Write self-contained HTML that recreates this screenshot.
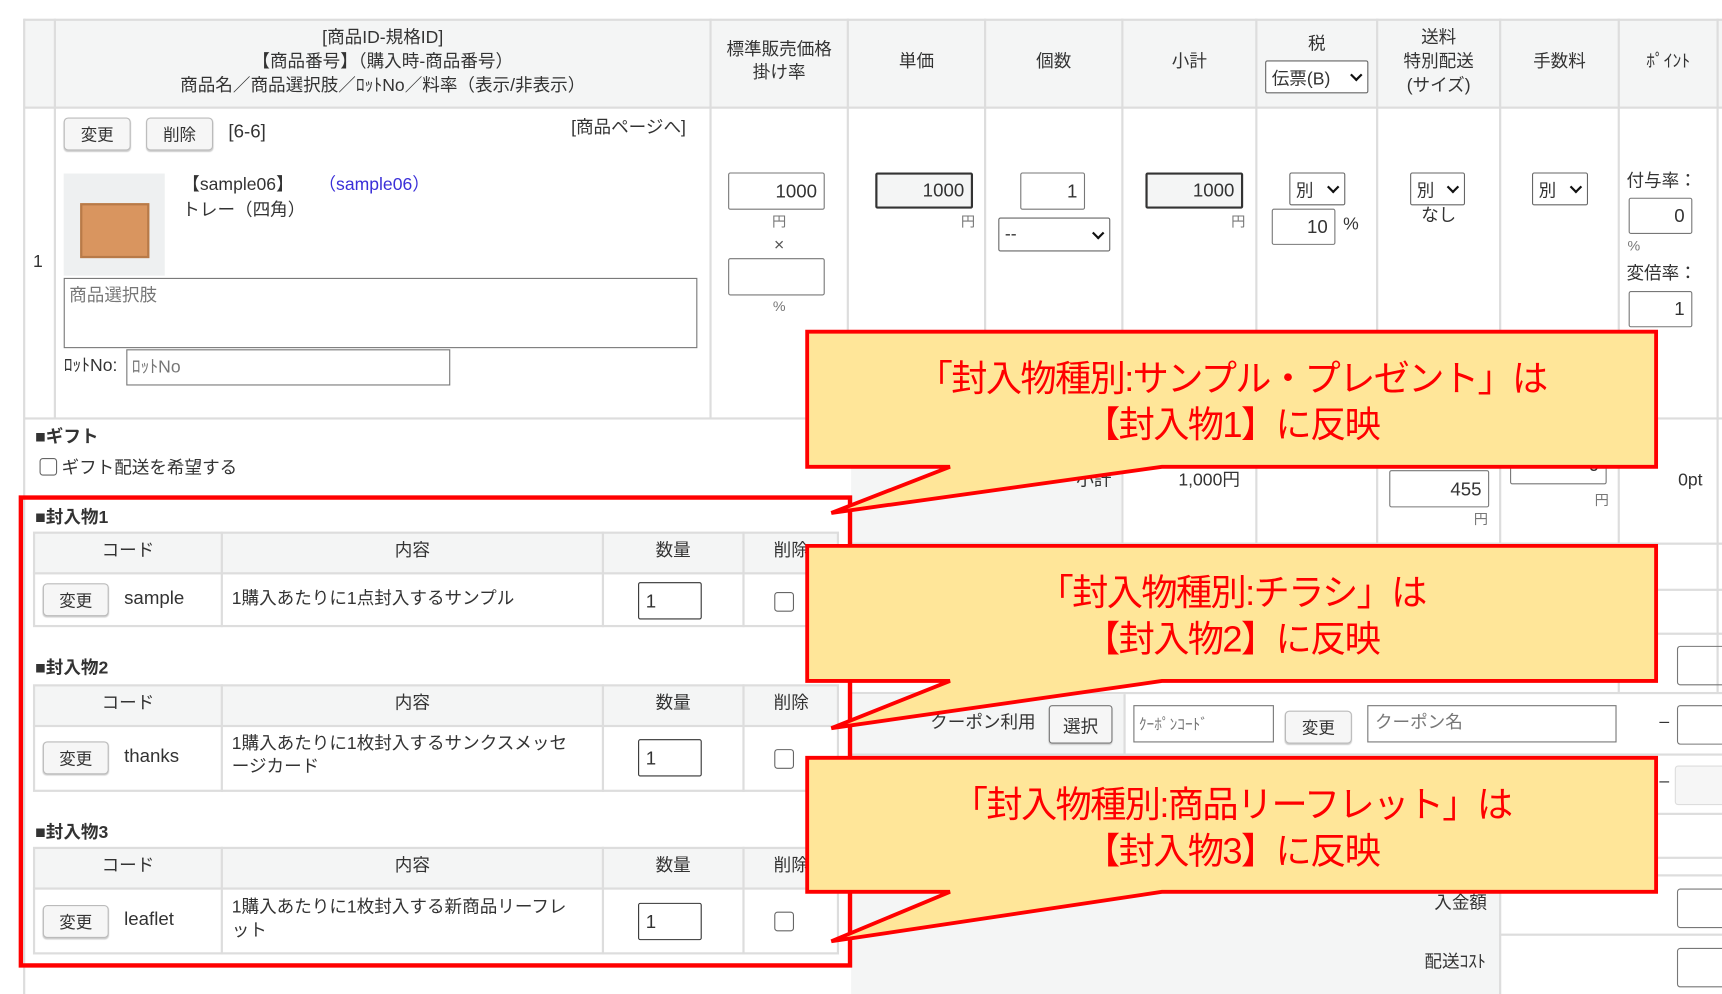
<!DOCTYPE html>
<html><head><meta charset="utf-8"><style>
html,body{margin:0;padding:0;background:#fff;width:1722px;height:994px;overflow:hidden}
#s{position:absolute;left:0;top:0;width:1568px;height:905px;transform:scale(1.09821,1.09834);transform-origin:0 0;font-family:"Liberation Sans","Noto Sans CJK JP",sans-serif;color:#333;font-size:16px}
.a{position:absolute}
.g{position:absolute;background:#f4f5f5}
.hl{position:absolute;height:2px;background:#ddd}
.vl{position:absolute;width:2px;background:#ddd}
.t{position:absolute;white-space:nowrap;line-height:1}
.c{text-align:center}
.co{font-size:33px;color:#f00;letter-spacing:-1.5px}
.in{position:absolute;border:1px solid #777;border-radius:2px;background:#fff;box-sizing:border-box;font-size:17px;line-height:1;display:flex;align-items:center;justify-content:flex-end;padding-right:6px}
.dk{border:2px solid #333;background:#f4f5f5}
.btn{position:absolute;border:1px solid #bbb;border-radius:4px;background:#f6f6f6;box-sizing:border-box;font-size:15px;display:flex;align-items:center;justify-content:center;box-shadow:0 1px 1px #ccc}
.sel{position:absolute;border:1px solid #666;border-radius:2px;background:#fff;box-sizing:border-box;font-size:16px;display:flex;align-items:center;padding-left:5px}
.sel:after{content:"";position:absolute;right:6px;top:50%;width:6px;height:6px;border-right:2.5px solid #111;border-bottom:2.5px solid #111;transform:translateY(-70%) rotate(45deg)}
.cb{position:absolute;width:16px;height:16px;border:1px solid #666;border-radius:3px;background:#fff;box-sizing:border-box}
.b{font-weight:bold}
</style></head><body><div id="s">
<div class="g" style="left:22px;top:18px;width:1546px;height:80px"></div>
<div class="hl" style="left:22px;top:17px;width:1546px"></div>
<div class="hl" style="left:22px;top:97px;width:1546px"></div>
<div class="hl" style="left:22px;top:380px;width:1546px"></div>
<div class="vl" style="left:21px;top:17px;height:888px"></div>
<div class="vl" style="left:49px;top:17px;height:364px"></div>
<div class="vl" style="left:646px;top:17px;height:364px"></div>
<div class="vl" style="left:771px;top:17px;height:364px"></div>
<div class="vl" style="left:896px;top:17px;height:364px"></div>
<div class="vl" style="left:1021px;top:17px;height:480px"></div>
<div class="vl" style="left:1143px;top:17px;height:480px"></div>
<div class="vl" style="left:1253px;top:17px;height:480px"></div>
<div class="vl" style="left:1365px;top:17px;height:480px"></div>
<div class="vl" style="left:1473px;top:17px;height:613px"></div>
<div class="vl" style="left:1563px;top:17px;height:613px"></div>

<div class="t c" style="left:50px;width:597px;top:27px">[商品ID-規格ID]</div>
<div class="t c" style="left:50px;width:597px;top:49px">【商品番号】（購入時-商品番号）</div>
<div class="t c" style="left:50px;width:597px;top:71px">商品名／商品選択肢／ﾛｯﾄNo／料率（表示/非表示）</div>
<div class="t c" style="left:647px;width:125px;top:38px">標準販売価格</div>
<div class="t c" style="left:647px;width:125px;top:59px">掛け率</div>
<div class="t c" style="left:772px;width:125px;top:49px">単価</div>
<div class="t c" style="left:897px;width:125px;top:49px">個数</div>
<div class="t c" style="left:1022px;width:122px;top:49px">小計</div>
<div class="t c" style="left:1144px;width:110px;top:33px">税</div>
<div class="sel" style="left:1152px;top:55px;width:94px;height:30px">伝票(B)</div>
<div class="t c" style="left:1254px;width:112px;top:27px">送料</div>
<div class="t c" style="left:1254px;width:112px;top:49px">特別配送</div>
<div class="t c" style="left:1254px;width:112px;top:71px">(サイズ)</div>
<div class="t c" style="left:1366px;width:108px;top:49px">手数料</div>
<div class="t c" style="left:1474px;width:90px;top:49px">ﾎﾟｲﾝﾄ</div>

<div class="t" style="left:30px;top:231px">1</div>
<div class="btn" style="left:58px;top:107px;width:61px;height:30px">変更</div>
<div class="btn" style="left:133px;top:107px;width:61px;height:30px">削除</div>
<div class="t" style="left:208px;top:111px;font-size:17px">[6-6]</div>
<div class="t" style="left:520px;top:109px">[商品ページへ]</div>
<div class="a" style="left:58px;top:158px;width:92px;height:93px;background:#eef0f1"><div class="a" style="left:15px;top:27px;width:63px;height:50px;background:#d9955f;border:2px solid #b87a48;box-sizing:border-box"></div></div>
<div class="t" style="left:166px;top:161px">【sample06】</div>
<div class="t" style="left:290px;top:161px;color:#3a2fd8">（sample06）</div>
<div class="t" style="left:166px;top:184px">トレー（四角）</div>
<div class="a" style="left:58px;top:253px;width:577px;height:64px;border:1px solid #777;box-sizing:border-box;background:#fff"><div class="t" style="left:4px;top:8px;color:#777">商品選択肢</div></div>
<div class="t" style="left:58px;top:326px">ﾛｯﾄNo:</div>
<div class="a" style="left:115px;top:318px;width:295px;height:33px;border:1px solid #777;box-sizing:border-box;background:#fff"><div class="t" style="left:4px;top:8px;color:#777">ﾛｯﾄNo</div></div>

<div class="in" style="left:663px;top:157px;width:88px;height:34px">1000</div>
<div class="t c" style="left:647px;width:125px;top:195px;font-size:13px;color:#777">円</div>
<div class="t c" style="left:647px;width:125px;top:216px;color:#555">×</div>
<div class="in" style="left:663px;top:235px;width:88px;height:34px"></div>
<div class="t c" style="left:647px;width:125px;top:272px;font-size:13px;color:#777">%</div>

<div class="in dk" style="left:797px;top:157px;width:89px;height:33px">1000</div>
<div class="t" style="left:875px;top:195px;font-size:13px;color:#777">円</div>
<div class="in" style="left:929px;top:157px;width:59px;height:34px">1</div>
<div class="sel" style="left:909px;top:198px;width:102px;height:31px">--</div>
<div class="in dk" style="left:1043px;top:157px;width:89px;height:33px">1000</div>
<div class="t" style="left:1121px;top:195px;font-size:13px;color:#777">円</div>
<div class="sel" style="left:1174px;top:157px;width:51px;height:30px">別</div>
<div class="in" style="left:1158px;top:190px;width:58px;height:33px">10</div>
<div class="t" style="left:1223px;top:197px">%</div>
<div class="sel" style="left:1284px;top:157px;width:50px;height:30px">別</div>
<div class="t c" style="left:1254px;width:112px;top:189px">なし</div>
<div class="sel" style="left:1395px;top:157px;width:51px;height:30px">別</div>
<div class="t" style="left:1481px;top:158px">付与率：</div>
<div class="in" style="left:1483px;top:180px;width:58px;height:33px">0</div>
<div class="t" style="left:1482px;top:217px;font-size:13px;color:#777">%</div>
<div class="t" style="left:1481px;top:242px">変倍率：</div>
<div class="in" style="left:1483px;top:265px;width:58px;height:33px">1</div>

<div class="g" style="left:775px;top:382px;width:246px;height:113px"></div>
<div class="hl" style="left:775px;top:494px;width:793px"></div>
<div class="t" style="left:980px;top:430px">小計</div>
<div class="t" style="left:1073px;top:430px">1,000円</div>
<div class="in" style="left:1265px;top:428px;width:91px;height:34px">455</div>
<div class="t" style="left:1342px;top:466px;font-size:13px;color:#777">円</div>
<div class="in" style="left:1375px;top:405px;width:88px;height:36px">0</div>
<div class="t" style="left:1452px;top:449px;font-size:13px;color:#777">円</div>
<div class="t" style="left:1528px;top:430px">0pt</div>

<div class="hl" style="left:775px;top:536px;width:793px"></div>
<div class="hl" style="left:775px;top:576px;width:793px"></div>
<div class="hl" style="left:775px;top:630px;width:793px"></div>
<div class="hl" style="left:775px;top:686px;width:793px"></div>
<div class="hl" style="left:775px;top:740px;width:793px"></div>
<div class="hl" style="left:775px;top:780px;width:793px"></div>
<div class="hl" style="left:775px;top:796px;width:793px"></div>
<div class="hl" style="left:775px;top:850px;width:793px"></div>
<div class="g" style="left:775px;top:632px;width:249px;height:54px"></div>
<div class="g" style="left:775px;top:798px;width:590px;height:107px"></div>
<div class="vl" style="left:1365px;top:798px;height:107px"></div>
<div class="vl" style="left:1023px;top:632px;height:54px"></div>
<div class="t" style="left:847px;top:651px">クーポン利用</div>
<div class="btn" style="left:955px;top:642px;width:58px;height:35px;border-color:#777;border-radius:3px;font-size:16px">選択</div>
<div class="a" style="left:1032px;top:642px;width:128px;height:34px;border:1px solid #777;box-sizing:border-box"><div class="t" style="left:4px;top:9px;color:#777;font-size:14px">ｸｰﾎﾟﾝｺｰﾄﾞ</div></div>
<div class="btn" style="left:1170px;top:647px;width:61px;height:30px">変更</div>
<div class="a" style="left:1245px;top:642px;width:227px;height:34px;border:1px solid #777;box-sizing:border-box"><div class="t" style="left:6px;top:8px;color:#777">クーポン名</div></div>
<div class="t" style="left:1511px;top:650px">–</div>
<div class="t" style="left:1511px;top:704px">–</div>
<div class="a" style="left:1527px;top:588px;width:50px;height:34px;border:1px solid #777;border-radius:3px"></div>
<div class="a" style="left:1527px;top:642px;width:50px;height:34px;border:1px solid #777;border-radius:3px"></div>
<div class="a" style="left:1525px;top:697px;width:50px;height:34px;border:1px solid #ddd;background:#f6f6f6;border-radius:3px"></div>
<div class="a" style="left:1527px;top:809px;width:50px;height:34px;border:1px solid #777;border-radius:3px"></div>
<div class="a" style="left:1527px;top:863px;width:50px;height:34px;border:1px solid #777;border-radius:3px"></div>
<div class="t" style="left:1306px;top:815px">入金額</div>
<div class="t" style="left:1297px;top:869px">配送ｺｽﾄ</div>

<div class="t b" style="left:32px;top:391px">■ギフト</div>
<div class="cb" style="left:36px;top:417px"></div>
<div class="t" style="left:56px;top:419px">ギフト配送を希望する</div>

<div class="t b" style="left:32px;top:464px">■封入物1</div>
<div class="t b" style="left:32px;top:601px">■封入物2</div>
<div class="t b" style="left:32px;top:751px">■封入物3</div>

<div class="g" style="left:31px;top:485px;width:733px;height:37px"></div>
<div class="a" style="left:30px;top:484px;width:734px;height:87px;border:2px solid #ddd;box-sizing:border-box"></div>
<div class="hl" style="left:30px;top:521px;width:734px"></div>
<div class="vl" style="left:201px;top:484px;height:87px"></div>
<div class="vl" style="left:548px;top:484px;height:87px"></div>
<div class="vl" style="left:676px;top:484px;height:87px"></div>
<div class="t c" style="left:31px;width:171px;top:494px">コード</div>
<div class="t c" style="left:202px;width:347px;top:494px">内容</div>
<div class="t c" style="left:549px;width:128px;top:494px">数量</div>
<div class="t c" style="left:677px;width:87px;top:494px">削除</div>
<div class="btn" style="left:39px;top:531px;width:60px;height:30px">変更</div>
<div class="t" style="left:113px;top:536px;font-size:17px">sample</div>
<div class="t" style="left:211px;top:538px">1購入あたりに1点封入するサンプル</div>
<div class="in" style="left:581px;top:530px;width:58px;height:34px;justify-content:flex-start;padding-left:6px;border-color:#333">1</div>
<div class="cb" style="left:705px;top:539px;width:18px;height:18px"></div>

<div class="g" style="left:31px;top:624px;width:733px;height:37px"></div>
<div class="a" style="left:30px;top:623px;width:734px;height:98px;border:2px solid #ddd;box-sizing:border-box"></div>
<div class="hl" style="left:30px;top:660px;width:734px"></div>
<div class="vl" style="left:201px;top:623px;height:98px"></div>
<div class="vl" style="left:548px;top:623px;height:98px"></div>
<div class="vl" style="left:676px;top:623px;height:98px"></div>
<div class="t c" style="left:31px;width:171px;top:633px">コード</div>
<div class="t c" style="left:202px;width:347px;top:633px">内容</div>
<div class="t c" style="left:549px;width:128px;top:633px">数量</div>
<div class="t c" style="left:677px;width:87px;top:633px">削除</div>
<div class="btn" style="left:39px;top:675px;width:60px;height:30px">変更</div>
<div class="t" style="left:113px;top:680px;font-size:17px">thanks</div>
<div class="t" style="left:211px;top:670px">1購入あたりに1枚封入するサンクスメッセ</div>
<div class="t" style="left:211px;top:691px">ージカード</div>
<div class="in" style="left:581px;top:673px;width:58px;height:34px;justify-content:flex-start;padding-left:6px;border-color:#333">1</div>
<div class="cb" style="left:705px;top:682px;width:18px;height:18px"></div>

<div class="g" style="left:31px;top:772px;width:733px;height:37px"></div>
<div class="a" style="left:30px;top:771px;width:734px;height:98px;border:2px solid #ddd;box-sizing:border-box"></div>
<div class="hl" style="left:30px;top:808px;width:734px"></div>
<div class="vl" style="left:201px;top:771px;height:98px"></div>
<div class="vl" style="left:548px;top:771px;height:98px"></div>
<div class="vl" style="left:676px;top:771px;height:98px"></div>
<div class="t c" style="left:31px;width:171px;top:781px">コード</div>
<div class="t c" style="left:202px;width:347px;top:781px">内容</div>
<div class="t c" style="left:549px;width:128px;top:781px">数量</div>
<div class="t c" style="left:677px;width:87px;top:781px">削除</div>
<div class="btn" style="left:39px;top:824px;width:60px;height:30px">変更</div>
<div class="t" style="left:113px;top:828px;font-size:17px">leaflet</div>
<div class="t" style="left:211px;top:819px">1購入あたりに1枚封入する新商品リーフレ</div>
<div class="t" style="left:211px;top:840px">ット</div>
<div class="in" style="left:581px;top:822px;width:58px;height:34px;justify-content:flex-start;padding-left:6px;border-color:#333">1</div>
<div class="cb" style="left:705px;top:830px;width:18px;height:18px"></div>

<div class="a" style="left:17px;top:451px;width:759px;height:430px;border:4px solid #f00;box-sizing:border-box"></div>

<svg class="a" style="left:0;top:0" width="1568" height="905">
<g fill="#ffe699" stroke="#f00" stroke-width="3.5" stroke-linejoin="miter">
<path d="M735,302 H1508 V425 H1058 L757,467 L865,425 H735 Z"/>
<path d="M735,497 H1508 V620 H1058 L757,663 L865,620 H735 Z"/>
<path d="M735,690 H1508 V812 H1058 L757,857 L865,812 H735 Z"/>
</g>
</svg>
<div class="t c co" style="left:735px;width:773px;top:328px">「封入物種別:サンプル・プレゼント」は</div>
<div class="t c co" style="left:735px;width:773px;top:370px">【封入物1】に反映</div>
<div class="t c co" style="left:735px;width:773px;top:523px">「封入物種別:チラシ」は</div>
<div class="t c co" style="left:735px;width:773px;top:565px">【封入物2】に反映</div>
<div class="t c co" style="left:735px;width:773px;top:716px">「封入物種別:商品リーフレット」は</div>
<div class="t c co" style="left:735px;width:773px;top:758px">【封入物3】に反映</div>
</div></body></html>
